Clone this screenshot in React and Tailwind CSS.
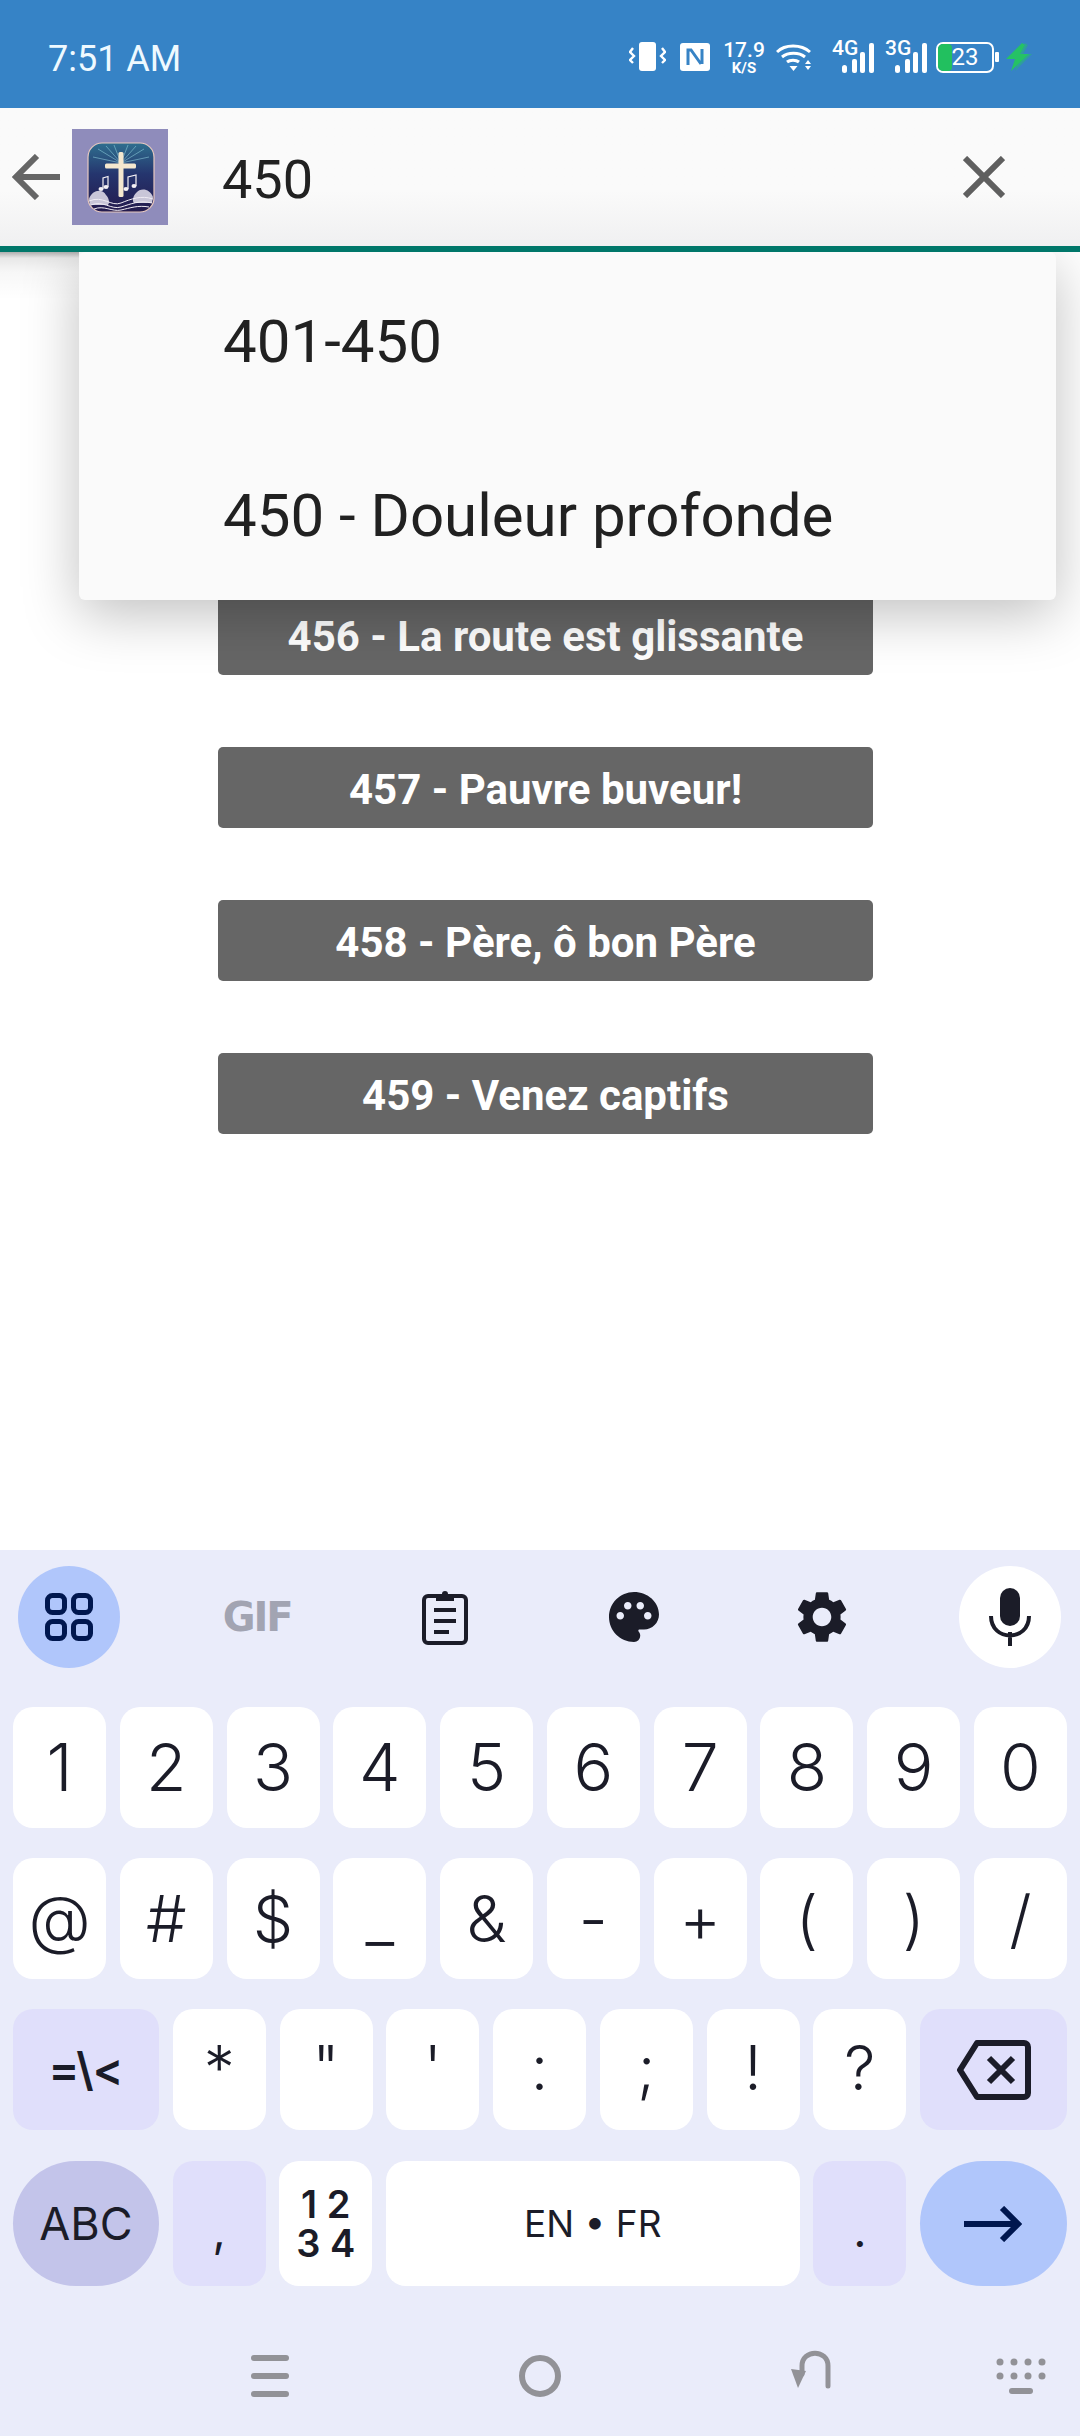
import React from 'react';
import { MdPalette, MdSettings } from 'react-icons/md';

const Logo = () => (
  <svg width="96" height="96" viewBox="0 0 96 96" className="ml-[12px] shrink-0">
    <defs>
      <linearGradient id="sq" x1="0" y1="0" x2="0" y2="1">
        <stop offset="0" stopColor="#2f6f8f" />
        <stop offset="0.45" stopColor="#25356e" />
        <stop offset="1" stopColor="#241a4d" />
      </linearGradient>
    </defs>
    <rect width="96" height="96" fill="#8f8cbb" />
    <rect x="16" y="14" width="66" height="69" rx="14" fill="url(#sq)" stroke="#e8c9c0" strokeWidth="1.2" />
    <g stroke="#8fd0dc" strokeWidth="0.7" opacity="0.8">
      <path d="M49 34L26 20M49 34L34 17M49 34L42 16M49 34L56 16M49 34L64 17M49 34L72 20M49 34L77 28M49 34L21 28" />
    </g>
    <path d="M17 70c3-9 13-11 17-4 3 3 4 8 2 10H18zM81 68c-3-8-12-10-17-4-3 3-4 8-2 10h18z" fill="#c9c6d8" />
    <path d="M17 72c14-6 22 6 32 2s20-8 32-4M19 76c12-5 20 5 30 2s18-7 31-4M22 80c10-4 18 3 27 1s17-5 28-3" fill="none" stroke="#f0ecf4" strokeWidth="1" />
    <rect x="46.500" y="23" width="5" height="45" rx="1.5" fill="#f4e8cf" />
    <rect x="33" y="34.500" width="31" height="5" rx="1.5" fill="#f4e8cf" />
    <path d="M31 60V49l5-1.500V58M56 60V48l8-2v11" fill="none" stroke="#f4f1f4" strokeWidth="1.200" />
    <ellipse cx="29" cy="60" rx="2.500" ry="2" fill="#f4f1f4" />
    <ellipse cx="34" cy="58" rx="2.500" ry="2" fill="#f4f1f4" />
    <ellipse cx="54" cy="60" rx="2.500" ry="2" fill="#f4f1f4" />
    <ellipse cx="62" cy="57" rx="2.500" ry="2" fill="#f4f1f4" />
  </svg>
);

const Signal = ({ label, className }) => (
  <div className={`relative w-[42px] h-[32px] ${className}`}>
    <span className="absolute left-0 -top-[5px] text-[21px] font-medium leading-[24px] font-[Roboto,sans-serif]">{label}</span>
    <svg width="42" height="32" viewBox="0 0 42 32" className="absolute inset-0">
      <rect x="10" y="24" width="5" height="8" rx="2.500" fill="#fff" />
      <rect x="20" y="18" width="5" height="14" rx="2" fill="#fff" />
      <rect x="28" y="11" width="5" height="21" rx="2" fill="#fff" />
      <rect x="37" y="2" width="5" height="30" rx="2" fill="#fff" />
    </svg>
  </div>
);

const StatusIcons = () => (
  <div className="flex items-center h-[34px] text-white">
    <svg width="37" height="30" viewBox="0 0 37 30" fill="none">
      <rect x="10" y="0" width="17" height="29" rx="3" fill="#fff" />
      <path d="M4 6L1 10l4 4-4 4 3 3M33 6l3 4-4 4 4 4-3 3" stroke="#fff" strokeWidth="2.400" />
    </svg>
    <svg width="30" height="28" viewBox="0 0 30 28" className="ml-[14px]">
      <rect width="30" height="28" rx="3" fill="#fff" />
      <path d="M8 22V7h3l10 14M22 6v15" fill="none" stroke="#3783c5" strokeWidth="3" />
    </svg>
    <div className="ml-[15px] w-[38px] flex flex-col items-center font-[Roboto,sans-serif] font-medium leading-none">
      <span className="text-[21px] h-[21px]">17.9</span>
      <span className="text-[15px] h-[14px] font-bold">K/S</span>
    </div>
    <svg width="36" height="30" viewBox="0 0 36 30" fill="none" className="ml-[13px]">
      <path d="M1 10c8-8 24-8 33 0M6 15c6-5 17-5 23 0M11 20c3-2.500 9-2.500 12 0" stroke="#fff" strokeWidth="3" />
      <path d="M13.500 24h8l-4 5z" fill="#fff" />
      <path d="M29 22l3-4 3 4zM29 24h6l-3 4z" fill="#fff" />
    </svg>
    <Signal label="4G" className="ml-[20px]" />
    <Signal label="3G" className="ml-[11px]" />
    <div className="ml-[9px] relative w-[58px] h-[31px] rounded-[7px] border-2 border-white overflow-hidden flex items-center justify-center">
      <div className="absolute left-0 top-0 bottom-0 w-[14px] bg-[#22c05f] rounded-r-[4px]" />
      <span className="relative text-[24px] leading-none font-[Roboto,sans-serif]">23</span>
    </div>
    <div className="ml-[1px] w-[4px] h-[10px] bg-white rounded-[1px]" />
    <svg width="27" height="30" viewBox="0 0 27 30" className="ml-[6px]">
      <path d="M20 1L5 17h9L10 29l17-17h-9l5-9z" fill="#25c265" opacity="0.45" />
      <path d="M17 1L1 17h9L6 29l18-17h-9l5-9z" fill="#25c265" />
    </svg>
  </div>
);

const Key = ({ children, tone = 'plain', className = '' }) => {
  const tones = {
    plain: 'bg-white rounded-[20px]',
    mod: 'bg-[#e0dffb] rounded-[20px]',
    abc: 'bg-[#c3c4ea] rounded-full',
    go: 'bg-[#b0c6fb] rounded-full',
  };
  return (
    <div className={`flex items-center justify-center text-[#1b1c28] font-[Inter,sans-serif] ${tones[tone]} ${className}`}>
      {children}
    </div>
  );
};

const row1 = ['1', '2', '3', '4', '5', '6', '7', '8', '9', '0'];
const row2 = ['@', '#', '$', '_', '&', '-', '+', '(', ')', '/'];
const row3 = ['*', '"', "'", ':', ';', '!', '?'];
const songs = ['456 - La route est glissante', '457 - Pauvre buveur!', '458 - Père, ô bon Père', '459 - Venez captifs'];

const NavBar = () => (
  <div className="grid grid-cols-[270px_270px_270px_210px] justify-items-end items-center h-[180px]">
    <div className="flex flex-col gap-[12px] w-[38px] mr-[-19px]">
      <div className="h-[6px] rounded-full bg-[#929297]" />
      <div className="h-[6px] rounded-full bg-[#929297]" />
      <div className="h-[6px] rounded-full bg-[#929297]" />
    </div>
    <div className="w-[42px] h-[42px] rounded-full border-[6px] border-[#929297] mr-[-21px]" />
    <svg width="42" height="40" viewBox="0 0 42 40" fill="none" className="mr-[-21px] mb-[15px]">
      <path d="M39 37V17C39 0 13 0 13 17v8" stroke="#929297" strokeWidth="5" strokeLinecap="round" />
      <path d="M2 20l7 19 8-17z" fill="#929297" />
    </svg>
    <svg width="50" height="36" viewBox="0 0 50 36" fill="#929297" className="mr-[-26px]">
      <circle cx="4" cy="4" r="3.500" /><circle cx="18" cy="4" r="3.500" /><circle cx="32" cy="4" r="3.500" /><circle cx="46" cy="4" r="3.500" />
      <circle cx="4" cy="18" r="3.500" /><circle cx="18" cy="18" r="3.500" /><circle cx="32" cy="18" r="3.500" /><circle cx="46" cy="18" r="3.500" />
      <rect x="13" y="30" width="24" height="6" rx="3" />
    </svg>
  </div>
);

const Keyboard = () => (
  <div className="h-[886px] bg-[#eaecfa] pt-[16px] flex flex-col">
    <div className="flex justify-between items-center pl-[18px] pr-[19px] h-[102px]">
      <div className="w-[102px] h-[102px] rounded-full bg-[#b0c6fb] flex items-center justify-center">
        <svg width="48" height="48" viewBox="0 0 48 48" fill="none" stroke="#00174f" strokeWidth="5">
          <rect x="2.500" y="2.500" width="17" height="17" rx="5" />
          <rect x="28.500" y="2.500" width="17" height="17" rx="5" />
          <rect x="2.500" y="28.500" width="17" height="17" rx="5" />
          <rect x="28.500" y="28.500" width="17" height="17" rx="5" />
        </svg>
      </div>
      <div className="w-[102px] flex justify-center text-[#a2a4b2] text-[40px] font-black leading-none font-['DejaVu_Sans',sans-serif] tracking-[-2px]">GIF</div>
      <div className="w-[102px] flex justify-center">
        <svg width="46" height="56" viewBox="0 0 46 56" fill="none">
          <rect x="2" y="7" width="42" height="47" rx="4" stroke="#1b1c28" strokeWidth="4" />
          <path d="M14 5h6a3 3 0 0 1 6 0h6v7H14z" fill="#1b1c28" />
          <path d="M12 21h22M12 32h22M12 43h15" stroke="#1b1c28" strokeWidth="4" />
        </svg>
      </div>
      <div className="w-[102px] flex justify-center"><MdPalette size={60} color="#1b1c28" /></div>
      <div className="w-[102px] flex justify-center"><MdSettings size={62} color="#1b1c28" /></div>
      <div className="w-[102px] h-[102px] rounded-full bg-white flex items-center justify-center">
        <svg width="42" height="58" viewBox="0 0 42 58" fill="none">
          <rect x="11" y="0" width="20" height="38" rx="10" fill="#1b1c28" />
          <path d="M2 28c0 26 38 26 38 0M21 44v14" stroke="#1b1c28" strokeWidth="4" />
        </svg>
      </div>
    </div>

    <div className="mt-[39px] px-[13px] flex flex-col gap-[30px]">
      <div className="grid grid-cols-[repeat(10,93px)] justify-between h-[121px]">
        {row1.map((k) => <Key key={k} className="text-[66px] font-[350]">{k}</Key>)}
      </div>
      <div className="grid grid-cols-[repeat(10,93px)] justify-between h-[121px]">
        {row2.map((k) => <Key key={k} className="text-[64px] font-[350]">{k}</Key>)}
      </div>
      <div className="grid grid-cols-[146px_repeat(7,93px)_147px] justify-between h-[121px]">
        <Key tone="mod" className="text-[46px] font-semibold">=\&lt;</Key>
        {row3.map((k) => <Key key={k} className="text-[62px] font-[350] pb-[5px]">{k}</Key>)}
        <Key tone="mod">
          <svg width="74" height="60" viewBox="0 0 74 60" fill="none" stroke="#1b1c28" strokeWidth="6">
            <path d="M20 3h47a4 4 0 0 1 4 4v46a4 4 0 0 1-4 4H20L3 30z" strokeLinejoin="round" />
            <path d="M32 18l24 24M56 18L32 42" />
          </svg>
        </Key>
      </div>
      <div className="grid grid-cols-[146px_93px_93px_414px_93px_147px] justify-between h-[125px] mt-[1px]">
        <Key tone="abc" className="text-[45px]">ABC</Key>
        <Key tone="mod" className="text-[46px] pt-[14px]">,</Key>
        <Key className="text-[38px] font-semibold">
          <span className="whitespace-pre-line text-center leading-[39px]">{'1 2\n3 4'}</span>
        </Key>
        <Key className="text-[37px]">EN • FR</Key>
        <Key tone="mod" className="text-[46px] pt-[14px]">.</Key>
        <Key tone="go">
          <svg width="58" height="36" viewBox="0 0 58 36" fill="none" stroke="#00174f" strokeWidth="6">
            <path d="M0 18h54M38 2l16 16-16 16" />
          </svg>
        </Key>
      </div>
    </div>

    <div className="flex-1">
      <NavBar />
    </div>
  </div>
);

export default function App() {
  return (
    <div className="w-[1080px] h-[2436px] flex flex-col bg-white font-[Roboto,sans-serif] overflow-hidden">
      <div className="h-[108px] shrink-0 bg-[#3683c6] flex items-center justify-between pl-[48px] pr-[48px] pt-[6px]">
        <span className="text-[36px] text-[#eef9ff] leading-none pt-[4px]">7:51 AM</span>
        <StatusIcons />
      </div>

      <div className="relative z-10 h-[144px] shrink-0 bg-gradient-to-b from-[#fafafa] via-[#fafafa] via-60% to-[#f0f0f1] border-b-[6px] border-[#00776a] flex items-center">
        <svg width="48" height="46" viewBox="0 0 48 46" fill="none" stroke="#666" strokeWidth="6" className="ml-[12px] shrink-0">
          <path d="M48 23H4M25 2L4 23l21 21" />
        </svg>
        <Logo />
        <span className="ml-[54px] text-[54px] text-[#212121] leading-none flex-1 pt-[5px]">450</span>
        <svg width="42" height="42" viewBox="0 0 42 42" stroke="#5f5f5f" strokeWidth="6" className="mr-[75px] shrink-0">
          <path d="M2 2l38 38M40 2L2 40" />
        </svg>
      </div>

      <div className="relative flex-1 bg-white">
        <div className="flex flex-col items-center gap-[72px] pt-[342px]">
          {songs.map((s) => (
            <div key={s} className="w-[655px] h-[81px] ml-[11px] pt-[3px] rounded-[5px] bg-[#666666] text-white text-[42px] font-bold flex items-center justify-center">
              {s}
            </div>
          ))}
        </div>
        <div className="absolute left-[79px] top-0 w-[977px] h-[348px] bg-[#fafafa] rounded-[6px] shadow-[0_14px_56px_rgba(0,0,0,0.25)] pl-[144px] text-[#212121] text-[60px] flex flex-col">
          <div className="h-[174px] pt-[5px] flex items-center">401-450</div>
          <div className="h-[174px] pt-[5px] flex items-center">450 - Douleur profonde</div>
        </div>
        <div className="absolute inset-x-0 top-0 h-[48px] pointer-events-none bg-[linear-gradient(to_bottom,#00000050_0,#00000018_6px,#00000008_20px,transparent_48px)] [clip-path:polygon(0_0,79px_0,79px_100%,0_100%)]" />
      </div>

      <Keyboard />
    </div>
  );
}
